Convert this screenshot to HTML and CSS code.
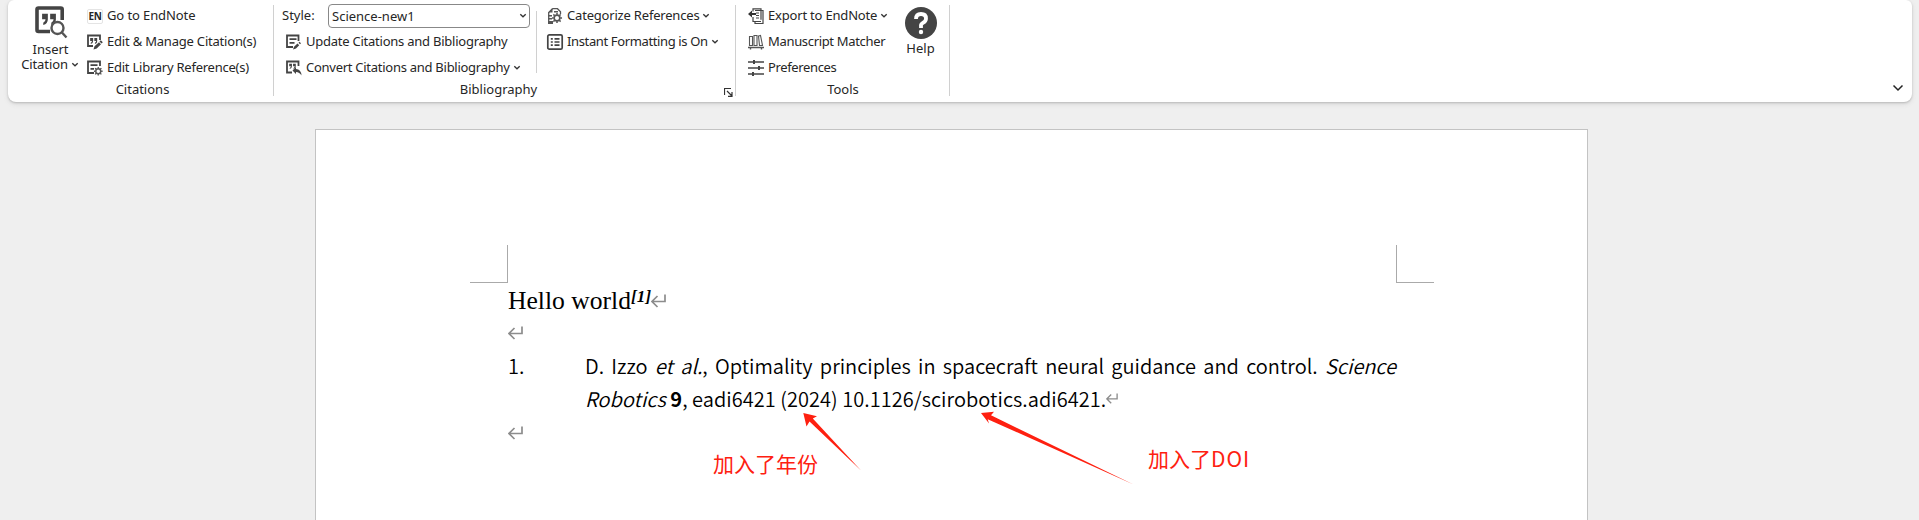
FILE: index.html
```html
<!DOCTYPE html>
<html lang="en">
<head>
<meta charset="utf-8">
<title>Document</title>
<link rel="stylesheet" href="styles.css">
</head>
<body>
<svg class="defs" width="0" height="0">
  <defs>
    <symbol id="chev" viewBox="0 0 8 6"><path d="M1.300 1.200 4 3.800 6.700 1.200" fill="none" stroke="#333" stroke-width="1.300"/></symbol>
    <symbol id="ret" viewBox="0 0 15 14"><path d="M14 .5V7.500H1.500M6.500 2 1 7.500 6.500 13" fill="none" stroke="#8c8c8c" stroke-width="1.700"/></symbol>
    <symbol id="gear" viewBox="0 0 10 10"><circle cx="5" cy="5" r="2.600" fill="#fff" stroke="#555" stroke-width="1.500"/><path d="M5 .4V2M5 8v1.600M.4 5H2M8 5h1.600M1.700 1.700l1.200 1.200M7.100 7.100l1.200 1.200M8.300 1.700 7.100 2.900M2.900 7.100 1.700 8.300" stroke="#555" stroke-width="1.400"/></symbol>
    <symbol id="quotes" viewBox="0 0 12 10"><path d="M0 0h5v5Q5 9 1 10V8Q3 7 3 5H0zM7 0h5v5q0 4-4 5V8q2-1 2-3H7z"/></symbol>
  </defs>
</svg>
<header class="ribbon">
  <section class="group citations">
    <div class="controls">
      <div class="big insert">
        <svg width="34" height="34" viewBox="0 0 34 34"><path d="M28.200 15V4.500q0-1.500-1.500-1.500H4.500Q3 3 3 4.500V25q0 1.500 1.500 1.500H16" fill="none" stroke="#444" stroke-width="3.600"/><use href="#quotes" x="8" y="8.500" width="14" height="11.500" fill="#444"/><circle cx="23.500" cy="23" r="6" fill="#fff" stroke="#555" stroke-width="2.400"/><path d="m27.500 27 5 5.500" stroke="#555" stroke-width="2.400"/></svg>
        <span>Insert</span>
        <span class="drop">Citation<svg class="chev" width="8" height="6"><use href="#chev"/></svg></span>
      </div>
      <div class="rows">
        <div class="row"><span class="en">EN</span><span class="t1">Go to EndNote</span></div>
        <div class="row"><svg class="ico" viewBox="0 0 16 16"><path d="M13 6V1.500H1V12h5" fill="none" stroke="#444" stroke-width="1.800"/><use href="#quotes" x="3" y="4" width="7.500" height="6" fill="#444"/><path d="m6.500 15.500 1-3.200 4.500-4 2 2L9.700 14.500zM12.500 7.500l1.300-1.200 2 2-1.300 1.200z" fill="#444"/></svg><span class="t2">Edit &amp; Manage Citation(s)</span></div>
        <div class="row"><svg class="ico" viewBox="0 0 16 16"><path d="M13 6V1.500H1V13h6M3.500 5.200h7M3.500 8.800h3.500" fill="none" stroke="#444" stroke-width="1.800"/><use href="#gear" x="6.500" y="6.500" width="9.500" height="9.500"/></svg><span class="t3">Edit Library Reference(s)</span></div>
      </div>
    </div>
    <div class="label">Citations</div>
  </section>
  <section class="group biblio">
    <div class="controls">
      <div class="rows first">
        <div class="row style"><span class="stlabel">Style:</span><div class="combo"><span>Science-new1</span><svg width="8" height="6"><use href="#chev"/></svg></div></div>
        <div class="row"><svg class="ico" viewBox="0 0 16 16"><path d="M12.500 7V1.500H1V13h6M3.500 5.200h7M3.500 8.800h5" fill="none" stroke="#444" stroke-width="1.800"/><path d="m7 15.500 1-2.800 3.500-3.200 1.700 1.700L10 14.500zM12.500 8.700l1-1 1.500 1.500-1 1z" fill="#444"/></svg><span class="t4">Update Citations and Bibliography</span></div>
        <div class="row"><svg class="ico" viewBox="0 0 16 16"><path d="M12.500 6V1.500H1V12.500h5" fill="none" stroke="#444" stroke-width="1.800"/><use href="#quotes" x="3" y="3.500" width="7" height="5.500" fill="#444"/><path d="M6.500 10.500 10 7v2q5 0 5.500 6.500-2-3.500-5.500-3.500v2z" fill="#444"/></svg><span class="t5">Convert Citations and Bibliography</span><svg class="chev" width="8" height="6"><use href="#chev"/></svg></div>
      </div>
      <div class="rows second">
        <div class="row"><svg class="ico" viewBox="0 0 16 16"><path d="M5.500.700h5l3 3V6M5.500.700 1.700 4.500V15.300H6" fill="none" stroke="#555" stroke-width="1.300"/><path d="M5.500 0v4.500H1.500zM1 7h4v1.500H1zM1 10h4v1.500H1zM1 13h5v3H1zM7 3h4v1.500H7z" fill="#555"/><use href="#gear" x="4.500" y="4.500" width="11" height="11"/></svg><span class="t6">Categorize References</span><svg class="chev" width="8" height="6"><use href="#chev"/></svg></div>
        <div class="row"><svg class="ico" viewBox="0 0 16 16"><rect x=".8" y=".8" width="14.400" height="14.400" rx="1.500" fill="none" stroke="#444" stroke-width="1.700"/><path d="M3.800 4.800h2M3.800 8h2M3.800 11.200h2M7.500 4.800h5M7.500 8h5M7.500 11.200h5" stroke="#444" stroke-width="1.700"/></svg><span class="t7">Instant Formatting is On</span><svg class="chev" width="8" height="6"><use href="#chev"/></svg></div>
      </div>
    </div>
    <div class="label">Bibliography<svg class="launch" width="9" height="9" viewBox="0 0 9 9"><path d="M.5 7V.5H7M3 3l5 5M8 4v4.300H4" fill="none" stroke="#333" stroke-width="1.200"/></svg></div>
  </section>
  <section class="group tools">
    <div class="controls">
      <div class="rows">
        <div class="row"><svg class="ico" viewBox="0 0 16 16"><path d="M5 3.500V.8h8v11M5 9v4.500h8M7 2.500h8v13H7v-2" fill="none" stroke="#444" stroke-width="1.200"/><path d="M8 5h3M8 7.500h3M8 10h3" stroke="#444"/><path d="M0 6 4 2.500V5h4v2H4v2.500z" fill="#333"/></svg><span class="t8">Export to EndNote</span><svg class="chev" width="8" height="6"><use href="#chev"/></svg></div>
        <div class="row"><svg class="ico" viewBox="0 0 16 16"><path d="M1.500 2.500h3v9h-3zM6 1.500h3v10H6zM10.500 2l2-.5 2 10h-3z" fill="none" stroke="#555" stroke-width="1.100"/><path d="M0 13.500h16M2.500 13v2.500M13.500 13v2.500" stroke="#555" stroke-width="1.400"/></svg><span class="t9">Manuscript Matcher</span></div>
        <div class="row"><svg class="ico" viewBox="0 0 16 16"><path d="M0 2h16M0 8h16M0 14h16" stroke="#444" stroke-width="1.700"/><path d="M6 0v4M11 6v4M5 12v4" stroke="#444" stroke-width="2"/></svg><span class="t10">Preferences</span></div>
      </div>
      <div class="big help">
        <svg width="32" height="32" viewBox="0 0 32 32"><circle cx="16" cy="16" r="16" fill="#444"/><path d="M11 12q0-5 5-5t5 4.500q0 2.600-2.700 4.200T16 19v2" fill="none" stroke="#fff" stroke-width="3.800"/><circle cx="16" cy="25" r="2.200" fill="#fff"/></svg>
        <span>Help</span>
      </div>
    </div>
    <div class="label">Tools</div>
  </section>
  <svg class="collapse" width="12" height="8" viewBox="0 0 12 8"><path d="m1.500 1.500 4.500 4.500 4.500-4.500" fill="none" stroke="#222" stroke-width="1.500"/></svg>
</header>
<main class="page">
  <div class="marks"><i class="ml"></i><i class="mr"></i></div>
  <p class="hello">Hello world<b>[1]</b><svg width="15" height="14"><use href="#ret"/></svg></p>
  <p class="empty"><svg width="15" height="14"><use href="#ret"/></svg></p>
  <div class="ref">
    <span class="num">1.</span>
    <div class="text">
      <p class="l1">D. Izzo <em>et al.</em>, Optimality principles in spacecraft neural guidance and control. <em>Science</em></p>
      <p class="l2"><em>Robotics</em> <strong>9</strong>, eadi6421 (2024) 10.1126/scirobotics.adi6421.<svg width="12" height="11"><use href="#ret"/></svg></p>
    </div>
  </div>
  <p class="empty last"><svg width="15" height="14"><use href="#ret"/></svg></p>
</main>
<svg class="arrows" width="1919" height="520"><path d="M803.300 413 817 416.300 812.800 418.600 861 470.500 809.500 421.600 806.500 426.500zM981 413 994 411.800 991 415.300 1133.500 484.500 987.700 419.200 989 423.500z" fill="#fe2010"/></svg>
<div class="note year">加入了年份</div>
<div class="note doi">加入了<span>DOI</span></div>
</body>
</html>
```
FILE: styles.css
```css
* { box-sizing: border-box; }
body { margin: 0; width: 1919px; height: 520px; overflow: hidden; position: relative; background: #efefef; font: 13px/16px "Noto Sans", "Noto Sans CJK SC", sans-serif; color: #262626; }
p { margin: 0; }
.defs { position: absolute; }
.ribbon { position: relative; display: flex; margin: 0 7px 0 8px; height: 102px; background: #fff; border-radius: 6px 6px 8px 8px; box-shadow: 0 1px 2px #bbb, 0 2px 5px #d8d8d8; }
.group { position: relative; height: 102px; padding-top: 3px; white-space: nowrap; }
.group::after { content: ""; position: absolute; right: 0; top: 5px; width: 1px; height: 91px; background: #d0d0d0; }
.citations { width: 266px; }
.biblio { width: 462px; }
.tools { width: 214px; }
.controls { display: flex; height: 77px; }
.row { display: flex; align-items: center; height: 26px; }
.row > span { flex: none; padding-bottom: 2px; }
.t1 { letter-spacing: -.1px; }
.t2 { letter-spacing: -.2px; }
.t3, .t4 { letter-spacing: -.24px; }
.t5 { letter-spacing: -.27px; }
.t6, .t8 { letter-spacing: -.19px; }
.t7, .t10 { letter-spacing: -.37px; }
.t9 { letter-spacing: -.33px; }
.ico { flex: none; width: 16px; height: 16px; margin-right: 4px; overflow: visible; }
.row .chev { margin-left: 3px; }
.label { text-align: center; line-height: 18px; }
.citations .label { padding-left: 3px; }
.big { display: flex; flex-direction: column; align-items: center; line-height: 15px; }
.insert { width: 63px; margin-left: 11px; padding-top: 2px; margin-right: 5px; }
.insert > svg { margin-bottom: 3px; }
.drop { letter-spacing: -.1px; padding-right: 1px; }
.drop .chev { margin: 0 0 1px 3px; }
.row > .en { width: 16px; height: 15px; margin-right: 4px; padding: 0; border: 1px solid #e4e4e4; border-radius: 2px; font: bold 10px/13px "Noto Sans", sans-serif; letter-spacing: -.3px; text-align: center; }
.first { width: 264px; padding-left: 12px; }
.style { margin-left: -4px; }
.stlabel { width: 46px; }
.combo { width: 202px; height: 24px; border: 1px solid #888; border-radius: 4px; display: flex; align-items: center; justify-content: space-between; padding: 0 2px 1px 3px; }
.second { padding-left: 9px; position: relative; }
.second::before { content: ""; position: absolute; left: -2px; top: 8px; width: 1px; height: 62px; background: #d0d0d0; }
.biblio .label { padding-right: 13px; }
.launch { position: absolute; right: 3px; top: 88px; }
.tools .rows { padding-left: 12px; width: 156px; }
.help { width: 57px; padding-top: 4px; }
.help svg { margin-bottom: 2px; }
.collapse { position: absolute; right: 8px; top: 84px; }
.page { margin: 27px 0 0 315px; width: 1273px; height: 391px; background: #fff; border: 1px solid #c3c3c3; border-bottom: 0; padding: 115px 190px 0 192px; font: 20px/33.300px "Noto Sans CJK SC", sans-serif; font-weight: 350; color: #000; }
.marks { display: flex; justify-content: space-between; margin: 0 -37px 0 -38px; height: 38px; }
.marks i { width: 38px; height: 38px; border-bottom: 1px solid #aaa; }
.marks .ml { border-right: 1px solid #aaa; }
.marks .mr { border-left: 1px solid #aaa; }
.hello { height: 34px; font: 25.600px/34px "Liberation Serif", serif; display: flex; align-items: center; padding-top: 2px; }
.hello b { font: italic bold 17px/17px "Liberation Serif", serif; margin-top: -10px; letter-spacing: .2px; }
.empty { height: 32px; display: flex; align-items: center; }
.ref { display: flex; }
.num { width: 77px; }
.text { flex: 1; }
.l1 { text-align: justify; text-align-last: justify; white-space: nowrap; margin-right: 1px; }
.l2 { white-space: nowrap; letter-spacing: .04px; }
.l2 svg { vertical-align: 3px; }
.empty.last { height: 34px; }
.arrows { position: absolute; left: 0; top: 0; }
.note { position: absolute; font: 21px/30px "Noto Sans CJK SC", sans-serif; color: #fe2010; white-space: nowrap; }
.note span { letter-spacing: 1px; }
.year { left: 713px; top: 448px; }
.doi { left: 1148px; top: 443px; }
```
